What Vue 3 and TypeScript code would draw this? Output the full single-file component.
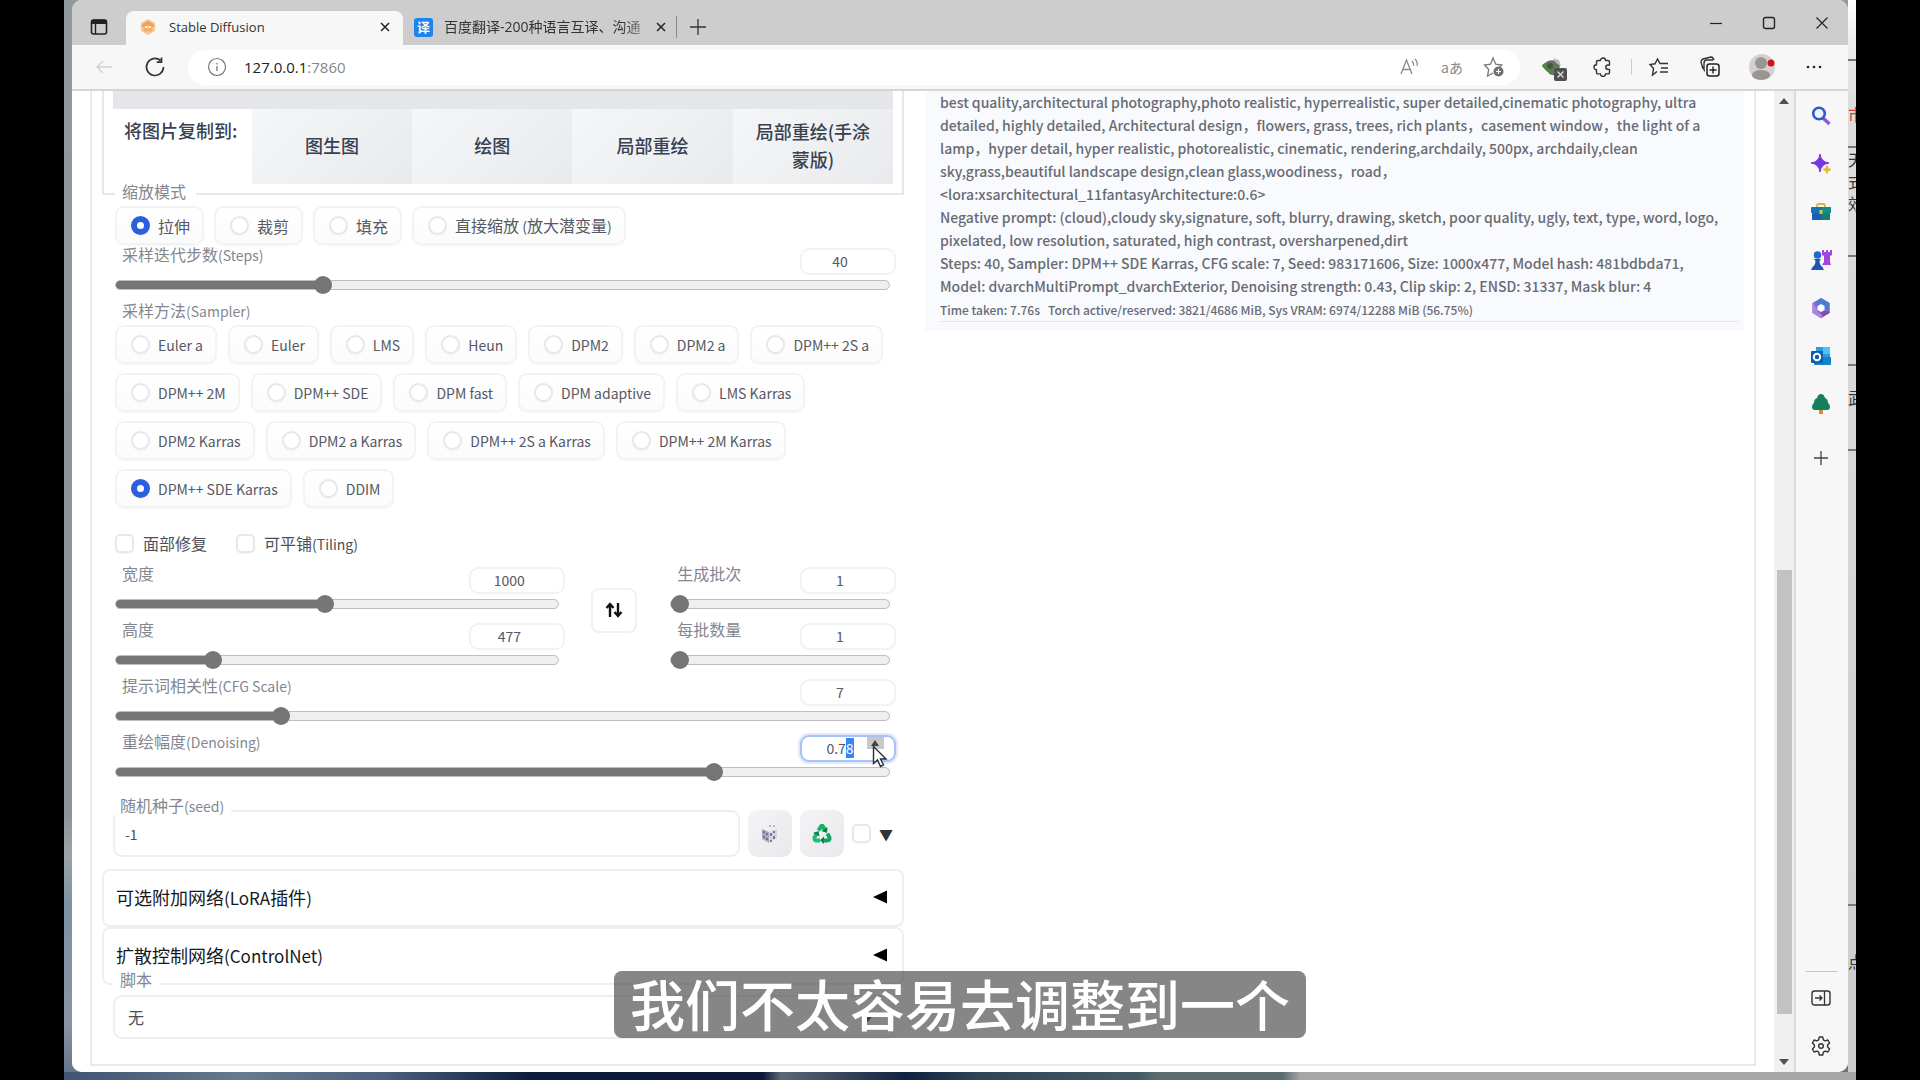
<script setup lang="ts">
import { computed, h, onMounted, reactive, ref } from 'vue'

interface Slider {
  id: string
  label: string
  value: number
  min: number
  max: number
  step: number
}

const copyTargets = ['图生图', '绘图', '局部重绘', '局部重绘(手涂蒙版)']
const resizeModes = ['拉伸', '裁剪', '填充', '直接缩放 (放大潜变量)']
const samplers = [
  'Euler a', 'Euler', 'LMS', 'Heun', 'DPM2', 'DPM2 a', 'DPM++ 2S a',
  'DPM++ 2M', 'DPM++ SDE', 'DPM fast', 'DPM adaptive', 'LMS Karras',
  'DPM2 Karras', 'DPM2 a Karras', 'DPM++ 2S a Karras', 'DPM++ 2M Karras',
  'DPM++ SDE Karras', 'DDIM',
]
const resizeMode = ref('拉伸')
const sampler = ref('DPM++ SDE Karras')
const faces = ref(false)
const tiling = ref(false)
const extra = ref(false)
const seed = ref('-1')
const script = ref('无')
const address = ref('127.0.0.1:7860')
const host = computed(() => address.value.split(':')[0])
const port = computed(() => ':' + address.value.split(':')[1])

const steps = reactive<Slider>({ id: 'steps', label: '采样迭代步数(Steps)', value: 40, min: 1, max: 150, step: 1 })
const sizes = reactive<Slider[]>([
  { id: 'width', label: '宽度', value: 1000, min: 64, max: 2048, step: 1 },
  { id: 'height', label: '高度', value: 477, min: 64, max: 2048, step: 1 },
])
const batches = reactive<Slider[]>([
  { id: 'count', label: '生成批次', value: 1, min: 1, max: 100, step: 1 },
  { id: 'batch', label: '每批数量', value: 1, min: 1, max: 8, step: 1 },
])
const guidance = reactive<Slider[]>([
  { id: 'cfg', label: '提示词相关性(CFG Scale)', value: 7, min: 1, max: 30, step: 1 },
  { id: 'denoise', label: '重绘幅度(Denoising)', value: 0.78, min: 0, max: 1, step: 0.01 },
])
const accordions = ['可选附加网络(LoRA插件)', '扩散控制网络(ControlNet)']

const infoLines = [
  'best quality,architectural photography,photo realistic, hyperrealistic, super detailed,cinematic photography, ultra',
  'detailed, highly detailed, Architectural design，flowers, grass, trees, rich plants，casement window，the light of a',
  'lamp，hyper detail, hyper realistic, photorealistic, cinematic, rendering,archdaily, 500px, archdaily,clean',
  'sky,grass,beautiful landscape design,clean glass,woodiness，road，',
  '<lora:xsarchitectural_11fantasyArchitecture:0.6>',
  'Negative prompt: (cloud),cloudy sky,signature, soft, blurry, drawing, sketch, poor quality, ugly, text, type, word, logo,',
  'pixelated, low resolution, saturated, high contrast, oversharpened,dirt',
  'Steps: 40, Sampler: DPM++ SDE Karras, CFG scale: 7, Seed: 983171606, Size: 1000x477, Model hash: 481bdbda71,',
  'Model: dvarchMultiPrompt_dvarchExterior, Denoising strength: 0.43, Clip skip: 2, ENSD: 31337, Mask blur: 4',
]

const fill = (s: Slider) => ({ '--p': (s.value - s.min) / (s.max - s.min) })

// Latin runs are set a little smaller than the Chinese ones beside them
const Mixed = (props: { text: string }) =>
  h('span', (props.text.match(/[\u3000-\u9fff\uff00-\uffef]+|[^\u3000-\u9fff\uff00-\uffef]+/g) ?? []).map((run: string) =>
    h('span', { class: /[\u3000-\uffef]/.test(run) ? 'han' : 'latin' }, run)))
Mixed.props = ['text']

onMounted(() => {
  const box = document.getElementById('denoise-n') as HTMLInputElement | null
  box?.focus()
  box?.setSelectionRange(3, 4)
})
</script>

<template>
  <div class="desktop">
    <div class="wallpaper">
      <div class="window">
        <header class="tabs">
          <button class="tabmenu" aria-label="标签操作菜单">
            <svg width="18" height="18" viewBox="0 0 18 18"><rect x="1.500" y="2" width="15" height="14" rx="2" fill="none" stroke="#222" stroke-width="1.600" /><path d="M1.500 5V4a2 2 0 0 1 2-2h11a2 2 0 0 1 2 2v1.500h-15z" fill="#222" stroke="#222" /><path d="M5.500 5v11" stroke="#222" stroke-width="1.400" /></svg>
          </button>
          <div class="tab active">
            <svg width="18" height="18" viewBox="0 0 18 18"><path d="M9 1l7 4v8l-7 4-7-4V5z" fill="#f7c795" /><path d="M5 5l4-2 4 2 3 3-3 1-4-2-4 2-3-1z" fill="#f0a050" /><path d="M4 11l2-2 3 2 3-2 2 2-2 3-3-1-3 1z" fill="#f3ad66" /><circle cx="7" cy="9" r="1" fill="#fff" /><circle cx="11" cy="9" r="1" fill="#fff" /></svg>
            <span class="tabname">Stable Diffusion</span>
            <button class="close" aria-label="关闭标签页"><svg width="10" height="10" viewBox="0 0 10 10"><path d="M1 1l8 8M9 1l-8 8" stroke="#222" stroke-width="1.500" /></svg></button>
          </div>
          <div class="tab second">
            <span class="favicon">译</span>
            <span class="tabname fade">百度翻译-200种语言互译、沟通</span>
            <button class="close" aria-label="关闭标签页"><svg width="10" height="10" viewBox="0 0 10 10"><path d="M1 1l8 8M9 1l-8 8" stroke="#222" stroke-width="1.500" /></svg></button>
          </div>
          <button class="newtab" aria-label="新建标签页"><svg width="18" height="18" viewBox="0 0 18 18"><path d="M9 1v16M1 9h16" stroke="#333" stroke-width="1.300" /></svg></button>
          <div class="winbtns">
            <button aria-label="最小化"><svg width="14" height="14" viewBox="0 0 14 14"><path d="M1 7.500h12" stroke="#222" stroke-width="1.200" /></svg></button>
            <button aria-label="最大化"><svg width="14" height="14" viewBox="0 0 14 14"><rect x="1.500" y="1.500" width="11" height="11" rx="2" fill="none" stroke="#222" stroke-width="1.400" /></svg></button>
            <button aria-label="关闭"><svg width="14" height="14" viewBox="0 0 14 14"><path d="M1.500 1.500l11 11M12.500 1.500l-11 11" stroke="#222" stroke-width="1.200" /></svg></button>
          </div>
        </header>

        <nav class="toolbar">
          <button class="back" aria-label="后退"><svg width="20" height="20" viewBox="0 0 20 20"><path d="M18 10H3M9 4l-6 6 6 6" fill="none" stroke="#cfcfcf" stroke-width="1.400" /></svg></button>
          <button class="reload" aria-label="刷新"><svg width="22" height="22" viewBox="0 0 22 22"><path d="M19.500 11a8.500 8.500 0 1 1-3-6.500M17.500 1.500v4.700h-4.700" fill="none" stroke="#333" stroke-width="1.700" /></svg></button>
          <div class="address">
            <svg width="20" height="20" viewBox="0 0 20 20"><circle cx="10" cy="10" r="8.500" fill="none" stroke="#777" stroke-width="1.200" /><path d="M10 9v5M10 6v1.500" stroke="#777" stroke-width="1.300" /></svg>
            <a class="url" href="#"><b>{{ host }}</b>{{ port }}</a>
            <button aria-label="大声朗读"><svg width="22" height="20" viewBox="0 0 22 20"><path d="M2 17L7.500 3 13 17M4 12.500h7" fill="none" stroke="#888" stroke-width="1.300" /><path d="M13 4q2 2 1.500 5M16 2q3 3 2 7" fill="none" stroke="#888" stroke-width="1.200" /></svg></button>
            <button class="translate" aria-label="翻译">aあ</button>
            <button aria-label="收藏"><svg width="22" height="22" viewBox="0 0 22 22"><path d="M10 17l-5.500 3 1.200-6.500L1.500 9l6-.8L10 2l2.700 6.200 6 .8-2 2" fill="none" stroke="#777" stroke-width="1.300" /><circle cx="15.500" cy="15.500" r="5" fill="#707070" /><path d="M15.500 13v5M13 15.500h5" stroke="#fff" stroke-width="1.200" /></svg></button>
          </div>
          <div class="tools">
            <button class="t1" aria-label="扩展程序"><svg width="26" height="26" viewBox="0 0 26 26"><path d="M1 11q6-8 15-5l3 5-3 9q-7 1-9-3z" fill="#66755f" /><path d="M1 10q4-3 8-2l3 7-3 3q-6-3-8-8z" fill="#4c8a44" /><circle cx="9" cy="11" r="3" fill="#4a5544" /><path d="M12 3l6 2 2 6-5-3z" fill="#b8bdb8" /><rect x="13" y="13" width="13" height="13" rx="2" fill="#505050" /><path d="M16.500 16.500l6 6M22.500 16.500l-6 6" stroke="#ddd" stroke-width="1.400" /></svg></button>
            <button class="t2" aria-label="扩展"><svg width="20" height="20" viewBox="0 0 20 20"><path d="M5 3.500h2.500a2.500 2.500 0 0 1 5 0H15q1.500 0 1.500 1.500v3H15a2.200 2.200 0 0 0 0 4.400h1.500v3q0 1.500-1.500 1.500h-2.500a2.500 2.500 0 0 1-5 0H5q-1.500 0-1.500-1.500v-2.700a2.500 2.500 0 0 1 0-5V5Q3.500 3.500 5 3.500z" fill="none" stroke="#333" stroke-width="1.400" stroke-linejoin="round" /></svg></button>
            <i class="bar"></i>
            <button class="t3" aria-label="收藏夹"><svg width="20" height="20" viewBox="0 0 20 20"><path d="M8 14.500L3.500 18l1-6.500L1 7.500l5-.7L8.500 2 11 6.500h8M12 11h7M11 15h8" fill="none" stroke="#333" stroke-width="1.400" /></svg></button>
            <button class="t4" aria-label="集锦"><svg width="22" height="22" viewBox="0 0 22 22"><path d="M4 13L2 6q0-2 2-3l8-2q2 0 3 3M6 15q-1 0-1-2V7q0-3 3-3h6" fill="none" stroke="#333" stroke-width="1.400" /><rect x="8" y="8" width="12" height="12" rx="2.500" fill="#f7f7f7" stroke="#222" stroke-width="1.500" /><path d="M14 10.500v7M10.500 14h7" stroke="#222" stroke-width="1.400" /></svg></button>
            <button class="t5" aria-label="个人资料"><svg width="28" height="28" viewBox="0 0 28 28"><circle cx="14" cy="14" r="13" fill="#d3d0cf" /><circle cx="13" cy="10" r="6" fill="#989593" /><ellipse cx="13" cy="22" rx="9" ry="5" fill="#989593" /><circle cx="23" cy="10" r="3.500" fill="#d3131c" /></svg></button>
            <button class="t6" aria-label="设置及其他"><svg width="18" height="6" viewBox="0 0 18 6"><circle cx="3" cy="3" r="1.300" fill="#222" /><circle cx="9" cy="3" r="1.300" fill="#222" /><circle cx="15" cy="3" r="1.300" fill="#222" /></svg></button>
          </div>
        </nav>

        <div class="body">
          <main class="page">
            <div class="app">
              <section class="left">
                <div class="copycard">
                  <div class="canvas"></div>
                  <div class="copyrow">
                    <span class="copylabel">将图片复制到:</span>
                    <button v-for="t in copyTargets" :key="t" class="copybtn">{{ t }}</button>
                  </div>
                </div>

                <div class="form">
                  <fieldset class="modes">
                    <legend><Mixed text="缩放模式" /></legend>
                    <div class="chips">
                      <label v-for="m in resizeModes" :key="m" class="chip"><input v-model="resizeMode" type="radio" name="mode" :value="m"><Mixed :text="m" /></label>
                    </div>
                  </fieldset>

                  <div class="slider">
                    <div class="head">
                      <label for="steps"><Mixed :text="steps.label" /></label>
                      <input v-model="steps.value" class="num" type="text" inputmode="numeric" aria-label="Steps">
                    </div>
                    <input id="steps" v-model.number="steps.value" type="range" :min="steps.min" :max="steps.max" :step="steps.step" :style="fill(steps)">
                  </div>

                  <fieldset class="samplers">
                    <legend><Mixed text="采样方法(Sampler)" /></legend>
                    <div class="chips">
                      <label v-for="s in samplers" :key="s" class="chip"><input v-model="sampler" type="radio" name="sampler" :value="s"><Mixed :text="s" /></label>
                    </div>
                  </fieldset>

                  <div class="checks">
                    <label><input v-model="faces" type="checkbox"><Mixed text="面部修复" /></label>
                    <label><input v-model="tiling" type="checkbox"><Mixed text="可平铺(Tiling)" /></label>
                  </div>

                  <div class="dims">
                    <div class="stack wide">
                      <div v-for="s in sizes" :key="s.id" class="slider">
                        <div class="head">
                          <label :for="s.id"><Mixed :text="s.label" /></label>
                          <input v-model="s.value" class="num" type="text" inputmode="numeric" :aria-label="s.label">
                        </div>
                        <input :id="s.id" v-model.number="s.value" type="range" :min="s.min" :max="s.max" :step="s.step" :style="fill(s)">
                      </div>
                    </div>
                    <button class="swap" aria-label="交换宽高"><svg width="18" height="18" viewBox="0 0 18 18"><path d="M5 16V4M1.500 7L5 3l3.500 4M13 2v12M9.500 11l3.500 4 3.500-4" fill="none" stroke="#111" stroke-width="2.400" /></svg></button>
                    <div class="stack narrow">
                      <div v-for="s in batches" :key="s.id" class="slider">
                        <div class="head">
                          <label :for="s.id"><Mixed :text="s.label" /></label>
                          <input v-model="s.value" class="num" type="text" inputmode="numeric" :aria-label="s.label">
                        </div>
                        <input :id="s.id" v-model.number="s.value" type="range" :min="s.min" :max="s.max" :step="s.step" :style="fill(s)">
                      </div>
                    </div>
                  </div>

                  <div class="stack">
                    <div v-for="s in guidance" :key="s.id" class="slider">
                      <div class="head">
                        <label :for="s.id"><Mixed :text="s.label" /></label>
                        <span class="numwrap">
                          <input :id="s.id + '-n'" v-model="s.value" class="num" type="text" inputmode="decimal" :aria-label="s.label">
                          <template v-if="s.id === 'denoise'">
                            <i class="spin"></i>
                            <svg class="cursor" width="16" height="24" viewBox="0 0 16 24"><path d="M1.500 1.500v17l4-3.500 3 6.500 3-1.500-3-6H14z" fill="#fff" stroke="#222c3c" stroke-width="1.400" /></svg>
                          </template>
                        </span>
                      </div>
                      <input :id="s.id" v-model.number="s.value" type="range" :min="s.min" :max="s.max" :step="s.step" :style="fill(s)">
                    </div>
                  </div>

                  <div class="seedrow">
                    <div class="field">
                      <label for="seed" class="over"><Mixed text="随机种子(seed)" /></label>
                      <input id="seed" v-model="seed" type="text">
                    </div>
                    <button class="tool" aria-label="随机"><svg width="18" height="20" viewBox="0 0 18 20"><path d="M1 5l7 3v11l-7-4z" fill="#aaaabd" /><path d="M8 8l8-3v9l-8 5z" fill="#d5d4e4" /><path d="M3 7v2M6 9v2M3 12v2M6 14v2M10 9v3M13 7v2M13 12v3M10 16v2" stroke="#66657d" stroke-width="1.600" /><path d="M8 2h2M13 1v2" stroke="#a5a5b5" stroke-width="1.500" /></svg></button>
                    <button class="tool" aria-label="重用"><svg width="20" height="20" viewBox="0 0 20 20"><path d="M6.500 6.500L9 2.500q1-1.500 2 0L13.500 7" fill="none" stroke="#12b368" stroke-width="4" /><path d="M15.500 9.500l2 4q.8 2.500-2 3H11" fill="none" stroke="#0fa45e" stroke-width="3.800" /><path d="M8 16.500H4.500q-2.600-.3-2-3L5 9" fill="none" stroke="#17bf74" stroke-width="3.800" /><path d="M15.500 3l-.5 6-5.500-2z" fill="#08834b" /><path d="M12 12.500V20l-4-3.700z" fill="#08834b" /><path d="M1 9l5.500-2 1 5.500z" fill="#08834b" /></svg></button>
                    <input v-model="extra" type="checkbox" aria-label="更多种子选项">
                    <span class="down">▼</span>
                  </div>
                </div>

                <button v-for="a in accordions" :key="a" class="accordion"><Mixed :text="a" /><svg width="14" height="14" viewBox="0 0 14 14"><path d="M14 0.500v13L0 7z" fill="#000" /></svg></button>

                <div class="scriptbox">
                  <label for="script" class="over"><Mixed text="脚本" /></label>
                  <select id="script" v-model="script"><option>无</option></select>
                  <i class="caret"></i>
                </div>
              </section>

              <section class="info">
                <p v-for="l in infoLines" :key="l" class="line">{{ l }}</p>
                <p class="perf"><span>Time taken: 7.76s</span><span>Torch active/reserved: 3821/4686 MiB, Sys VRAM: 6974/12288 MiB (56.75%)</span></p>
                <hr>
              </section>
            </div>
          </main>

          <div class="scroll">
            <svg width="10" height="6" viewBox="0 0 10 6"><path d="M0 6l5-6 5 6z" fill="#505050" /></svg>
            <div class="track"><div class="thumb"></div></div>
            <svg width="10" height="6" viewBox="0 0 10 6"><path d="M0 0l5 6 5-6z" fill="#505050" /></svg>
          </div>

          <aside class="side">
            <button aria-label="搜索"><svg width="20" height="20" viewBox="0 0 20 20"><path d="M12 12l6.500 6" stroke="#9354e0" stroke-width="3.400" /><circle cx="8" cy="7.500" r="5.800" fill="#eaf3ff" stroke="#2c5cc5" stroke-width="2.600" /></svg></button>
            <button aria-label="发现"><svg width="20" height="20" viewBox="0 0 20 20"><path d="M9 0q1 8 9 9-8 1-9 9-1-8-9-9 8-1 9-9z" fill="#7a35e2" stroke="#7a35e2" /><path d="M16 11.500q.5 3.500 4 4-3.500.5-4 4-.5-3.500-4-4 3.500-.5 4-4z" fill="#e5b92e" stroke="#e5b92e" /></svg></button>
            <button aria-label="工具"><svg width="20" height="20" viewBox="0 0 20 20"><path d="M6 6V3.500Q6 2 7.500 2h5Q14 2 14 3.500V6" fill="none" stroke="#d6b64a" stroke-width="1.800" /><rect x="1" y="10" width="18" height="8" rx="1" fill="#14806a" /><path d="M1 10h9v8H2q-1 0-1-1z" fill="#1c5dae" /><rect x="0" y="5" width="20" height="6" rx="1" fill="#1670bc" /><path d="M11 5h8q1 0 1 1v5h-9z" fill="#178a8c" /><rect x="8.500" y="8" width="3" height="4" fill="#e6c33d" /></svg></button>
            <button aria-label="游戏"><svg width="22" height="22" viewBox="0 0 22 22"><path d="M12 1h2v2h2V1h2v2h2V1h2v5l-2 1v6l1 3h-9l2-3V7l-2-1z" fill="#a145dc" /><circle cx="7.500" cy="6" r="3.800" fill="#2269cb" /><path d="M4 10h7l-1.500 2q0 4 3 6l1.500 3H1l1.500-3q3-2 3-6z" fill="#1b55b5" /></svg></button>
            <button aria-label="Microsoft 365"><svg width="20" height="20" viewBox="0 0 20 20"><path d="M10 0l8.500 5v10L10 20l-8.500-5V5z" fill="#7571d8" /><path d="M10 0l8.500 5v8l-6-3.500V6L6 10.500V4z" fill="#4c7dcc" /><path d="M18.500 13v2L10 20l-4-2.500 7-4.500z" fill="#854d9c" /><path d="M1.500 5L6 10.500l.5 3.500 5 3L10 20l-8.500-5z" fill="#b182e8" /><path d="M10 6l3.500 2v4L10 14l-3.500-2V8z" fill="#fff" /></svg></button>
            <button aria-label="Outlook"><svg width="20" height="20" viewBox="0 0 20 20"><path d="M5 1h14v11H5z" fill="#2b9be3" /><path d="M12 1h7v7h-7z" fill="#51c2f5" /><path d="M3 11h17v7q0 1-1 1H4q-1 0-1-1z" fill="#1681cb" /><rect x="0" y="5" width="12" height="12" rx="1" fill="#0c5fae" /><circle cx="6" cy="11" r="3.200" fill="none" stroke="#fff" stroke-width="2" /></svg></button>
            <button aria-label="Drop"><svg width="20" height="20" viewBox="0 0 20 20"><rect x="8" y="15" width="4" height="5" fill="#d58b38" /><path d="M10 0q3 0 4 4 3 1 3 5 2 1 2 4t-3 3H4q-3 0-3-3t2-4q0-4 3-5 1-4 4-4z" fill="#16805a" /></svg></button>
            <button class="add" aria-label="添加"><svg width="16" height="16" viewBox="0 0 16 16"><path d="M8 1v14M1 8h14" stroke="#444" stroke-width="1.300" /></svg></button>
            <span class="grow"></span>
            <i class="rule"></i>
            <button aria-label="隐藏侧边栏"><svg width="20" height="18" viewBox="0 0 20 18"><rect x="1" y="2" width="18" height="14" rx="2.500" fill="none" stroke="#333" stroke-width="1.400" /><path d="M13.500 2v14M4 9h7M8.500 6.500L11 9l-2.500 2.500" fill="none" stroke="#333" stroke-width="1.300" /></svg></button>
            <button aria-label="设置"><svg width="20" height="20" viewBox="0 0 20 20"><path d="M8.300 1h3.400l.7 2.800 1.700 1 2.800-.8 1.700 3-2 2v2l2 2-1.700 3-2.800-.8-1.700 1-.7 2.800H8.300l-.7-2.800-1.700-1-2.800.8-1.700-3 2-2V9l-2-2 1.700-3 2.800.8 1.700-1z" fill="none" stroke="#333" stroke-width="1.400" stroke-linejoin="round" /><circle cx="10" cy="10" r="2.300" fill="none" stroke="#333" stroke-width="1.400" /></svg></button>
          </aside>
        </div>
      </div>

      <div class="behind">
        <span class="r1"></span><span class="r2 red">市</span><span class="r3">天<br>式<br>效</span><span class="r4"></span><span class="r5">武</span><span class="r6"></span><span class="r7">点</span>
      </div>
    </div>
    <p class="caption">我们不太容易去调整到一个</p>
  </div>
</template>

<style>
body { margin: 0; background: #000; }
</style>

<style scoped>
* { box-sizing: border-box; }
button { border: 0; background: none; padding: 0; font: inherit; color: inherit; display: flex; align-items: center; justify-content: center; }
svg { display: block; flex: none; }
p { margin: 0; }
.desktop { position: relative; height: 100vh; padding: 0 64px; background: #000; font-family: "Noto Sans CJK SC", "Noto Sans", sans-serif; overflow: hidden; }
.wallpaper { height: 100%; display: flex; padding: 0 0 8px 8px; background: linear-gradient(90deg, #3e5470 0%, #667b90 10%, #4a607c 18%, #0c1c3c 26%, #0c1838 39%, #5b6878 40%, #10223f 47%, #2f4558 51%, #435a66 60%, #5c6d6e 61%, #5c6d6e 68%, #a6a6a6 69%, #a6a6a6 100%) bottom / 100% 8px no-repeat, linear-gradient(#90999b 0%, #8a9496 75%, #9aa4a4 79%, #7d92a4 84%, #8a92a4 95%, #5a7188 100%); }
.window { flex: 1; min-width: 0; display: flex; flex-direction: column; overflow: hidden; border-radius: 10px; background: #f7f7f7; }

.tabs { height: 45px; flex: none; display: flex; align-items: center; background: #cdcdcd; font-family: "Open Sans", "Noto Sans CJK SC", sans-serif; }
.tabmenu { width: 54px; padding-top: 9px; }
.tab { display: flex; align-items: center; align-self: flex-end; height: 34px; padding: 0 13px 2px; gap: 12px; font-size: 13px; color: #333; }
.tab.active { width: 277px; background: #f7f7f7; border-radius: 8px 8px 0 0; }
.tabname { flex: 1; min-width: 0; white-space: nowrap; overflow: hidden; line-height: 20px; }
.tab.second { width: 274px; padding: 0 10px 0 11px; gap: 11px; border-right: 1px solid #8a8a8a; height: 22px; margin-bottom: 7px; }
.fade { font-size: 14px; -webkit-mask-image: linear-gradient(90deg, #000 88%, #0006 100%); mask-image: linear-gradient(90deg, #000 88%, #0006 100%); }
.favicon { width: 19px; height: 19px; border-radius: 3px; background: #1b84ee; color: #fff; font-size: 13px; line-height: 19px; text-align: center; font-weight: 700; }
.close { width: 10px; height: 20px; }
.newtab { width: 42px; padding-top: 9px; }
.winbtns { margin-left: auto; display: flex; }
.winbtns button { width: 53px; height: 45px; }

.toolbar { height: 46px; flex: none; display: flex; align-items: center; border-bottom: 2px solid #d6d6d6; background: #f7f7f7; }
.back { width: 50px; padding-left: 14px; }
.reload { width: 66px; }
.address { flex: 1; height: 35px; display: flex; align-items: center; gap: 20px; padding: 0 15px 0 19px; background: #fff; border-radius: 18px; }
.url { flex: 1; margin-left: -3px; font: 15px/20px "Open Sans", sans-serif; color: #888; text-decoration: none; }
.url b { font-weight: 400; color: #222; }
.translate { font-size: 14px; color: #888; }
.tools { flex: none; width: 328px; display: flex; align-items: center; padding-left: 1px; }
.tools .t1 { width: 66px; padding-top: 2px; }
.tools .t2 { width: 34px; }
.bar { width: 1px; height: 16px; margin: 0 11px; background: #ccc; }
.tools .t3 { width: 34px; }
.tools .t4 { width: 68px; }
.tools .t5 { width: 38px; }
.tools .t6 { width: 68px; }

.body { flex: 1; min-height: 0; display: flex; }
.page { flex: 1; min-width: 0; padding: 0 18px 6px; background: #fff; overflow: hidden; display: flex; }
.app { flex: 1; min-width: 0; display: grid; grid-template-columns: 801fr 818fr; column-gap: 21px; padding: 0 10px; border: 2px solid #e9e9eb; border-top: 0; }
.copycard { padding: 0 9px 9px; border: 2px solid #e8e8ea; border-top: 0; }
.canvas { height: 18px; background: #e5e6e9; }
.copyrow { display: grid; grid-template-columns: 139px repeat(4, 1fr); height: 75px; font-size: 18px; line-height: 28px; font-weight: 500; color: #374151; }
.copylabel { padding: 7px 0 0 11px; white-space: nowrap; }
.copybtn { padding: 0 16px 3px; background: linear-gradient(135deg, #f5f6f7, #e9eaed); }

.form { padding: 0 8px 0 13px; }
fieldset { margin: 0; padding: 0; border: 0; min-width: 0; }
legend { display: block; padding: 0 10px 0 7px; height: 20px; background: #fff; }
legend, .head label, .over { font-size: 16px; line-height: 18px; color: #84878f; white-space: nowrap; }
:deep(.latin) { font-size: 14px; }
.modes { margin-top: -13px; position: relative; }
.chips { display: flex; flex-wrap: wrap; gap: 9px 11px; padding-top: 4px; }
.modes .chips { gap: 10px; }
.chip { display: flex; align-items: center; gap: 8px; height: 39px; padding: 0 12px 0 14px; border: 2px solid #f3f3f4; border-radius: 9px; background: linear-gradient(#fff, #fbfbfc); box-shadow: 0 1px 2px #0000000a; font-size: 16px; line-height: 24px; color: #555963; white-space: nowrap; }
input[type=radio], input[type=checkbox] { appearance: none; flex: none; margin: 0; width: 19px; height: 19px; border: 2px solid #e8e8ea; background: #fff; border-radius: 50%; box-shadow: 0 1px 1px #0000000a; }
input[type=checkbox] { border-radius: 5px; }
input[type=radio]:checked { border: 6px solid #2b5fe0; }
.head { height: 31px; display: flex; justify-content: space-between; align-items: flex-start; padding-left: 7px; }
.num { width: 96px; height: 27px; margin-top: 3px; padding: 0 16px 2px 0; border: 2px solid #f1f2f3; border-radius: 9px; text-align: center; font: 14px/20px "Noto Sans CJK SC", sans-serif; color: #555963; background: #fff; outline: 0; }
.num:focus { border-color: #a5c3f8; box-shadow: 0 0 0 2px #dfeafd; }
.num::selection { background: #3388f5; color: #fff; }
.numwrap { position: relative; display: flex; }
.spin { position: absolute; right: 12px; top: 5px; width: 17px; height: 12px; background: #c8c8c8; }
.spin::after { content: ""; position: absolute; left: 4px; top: 3px; border: 4px solid transparent; border-top: 0; border-bottom: 6px solid #444; }
.cursor { position: absolute; left: 72px; top: 13px; z-index: 2; }
.slider { display: flex; flex-direction: column; }
input[type=range] { appearance: none; display: block; width: calc(100% - 6px); height: 18px; margin: 0; background: none; }
input[type=range]::-webkit-slider-runnable-track { height: 10px; border: 1px solid #bdbdbd; border-radius: 5px; background: linear-gradient(#757575, #757575) 0 0 / calc(9px + (100% - 18px) * var(--p)) 100% no-repeat border-box, #efefef; }
input[type=range]::-webkit-slider-thumb { appearance: none; width: 18px; height: 18px; margin-top: -5px; border-radius: 50%; background: #757575; }
.samplers { margin-top: 7px; }
.checks { display: flex; gap: 29px; margin: 25px 0 11px; height: 20px; }
.checks label { display: flex; align-items: center; gap: 9px; font-size: 16px; line-height: 20px; color: #4b4f5a; }
.stack { display: flex; flex-direction: column; gap: 7px; }
.dims { display: flex; align-items: center; margin-bottom: 7px; }
.wide { flex: 449; }
.narrow { flex: 225; }
.swap { width: 46px; height: 45px; margin: 0 33px 13px 26px; border: 2px solid #f1f1f2; border-radius: 8px; }

.seedrow { display: flex; align-items: center; gap: 8px; height: 47px; margin: 29px 0 12px -2px; }
.field { position: relative; flex: 1; height: 47px; }
.field input { width: 100%; height: 100%; padding: 0 10px; border: 2px solid #eeeff0; border-radius: 9px; font: 14px/20px "Noto Sans CJK SC", sans-serif; color: #4b4f5a; }
.over { position: absolute; left: 0; top: -14px; padding: 0 7px; background: #fff; z-index: 1; }
.tool { width: 44px; height: 47px; border-radius: 9px; background: linear-gradient(135deg, #f4f4f6, #e9e9ed); }
.down { width: 17px; font-size: 14px; line-height: 20px; color: #333; }
.accordion { width: 100%; height: 58px; justify-content: space-between; padding: 0 15px 2px 12px; border: 2px solid #efeff1; border-radius: 8px; font-size: 18px; color: #16181d; }
.accordion :deep(.latin) { font-size: 17px; }
.scriptbox { position: relative; margin: 10px 9px 0 11px; }
.scriptbox .over { top: -25px; }
select { appearance: none; display: block; width: 100%; height: 44px; padding: 0 13px; border: 2px solid #eeeff0; border-radius: 9px; background: #fff; font: 16px/24px "Noto Sans CJK SC", sans-serif; color: #4b4f5a; }
.caret { position: absolute; right: 22px; top: 20px; border: 5px solid transparent; border-top: 7px solid #444; border-bottom: 0; }

.info { align-self: start; height: 240px; padding: 0 5px 0 15px; background: #f9fafd; color: #686b73; font-weight: 500; white-space: nowrap; }
.line { height: 23px; font-size: 14px; line-height: 23px; }
.perf { display: flex; gap: 8px; height: 23px; font-size: 12px; line-height: 23px; }
hr { margin: 0; border: 0; height: 1px; background: #e4e5e9; }

.scroll { width: 20px; flex: none; display: flex; flex-direction: column; align-items: center; padding: 7px 0; background: #f0f0f0; }
.track { flex: 1; width: 15px; margin: 3px 0; padding-bottom: 42px; display: flex; flex-direction: column; }
.thumb { margin-top: auto; height: 49%; background: #c2c2c2; }
.side { width: 54px; flex: none; display: flex; flex-direction: column; align-items: center; padding: 1px 0 2px; border-left: 2px solid #dcdcdc; background: #f7f7f7; }
.side button { width: 48px; height: 48px; flex: none; margin-right: 2px; }
.side .add { margin-top: 6px; }
.grow { flex: 1; }
.rule { width: 32px; height: 1px; background: #c8c8c8; margin-bottom: 2px; }

.behind { width: 8px; flex: none; display: flex; flex-direction: column; overflow: hidden; background: linear-gradient(#fff 0, #eee 40px, #ddd 100px, #ccc 100%); font-size: 16px; line-height: 22px; color: #333; }
.behind span { flex: none; width: 20px; border-bottom: 2px solid #777; }
.r1 { height: 61px; }
.r2 { height: 87px; padding-top: 42px; }
.red { color: #d33; }
.r3 { height: 109px; }
.r4 { height: 109px; }
.r5 { height: 85px; padding-top: 20px; }
.r6 { height: 455px; }
.r7 { height: 200px; padding-top: 44px; }

.caption { position: absolute; left: 50%; bottom: 42px; transform: translateX(-50%); padding: 0 16px 4px; border-radius: 8px; background: #3c3c3c9e; color: #fff; font-size: 55px; line-height: 63px; font-weight: 500; white-space: nowrap; z-index: 5; }
</style>
